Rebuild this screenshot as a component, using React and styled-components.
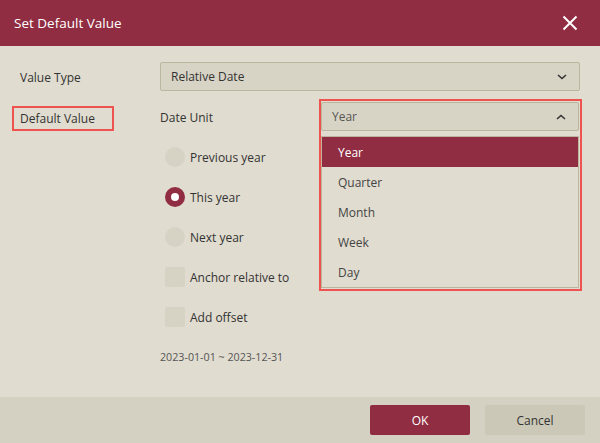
import styled, { createGlobalStyle } from "styled-components";
import { useState } from "react";

const GlobalStyle = createGlobalStyle`
  html, body { margin: 0; padding: 0; }
  body { font-family: "Open Sans", "Noto Sans", sans-serif; background: #e0dccf; }
`;

const MAROON = "#912d42";

const Dialog = styled.div`
  width: 600px;
  height: 443px;
  display: flex;
  flex-direction: column;
  background: #e0dccf;
  color: #333;
  font-size: 12px;
`;

const Header = styled.div`
  height: 46px;
  flex-shrink: 0;
  background: ${MAROON};
  display: flex;
  align-items: center;
  justify-content: space-between;
  padding: 0 22px 0 14px;
  color: #fff;
  font-size: 13.5px;
`;

const CloseBtn = styled.button`
  border: 0;
  background: transparent;
  padding: 0;
  width: 16px;
  height: 16px;
  display: flex;
  cursor: pointer;
`;

const Body = styled.div`
  flex: 1;
  display: grid;
  grid-template-columns: 140px 1fr;
  grid-auto-rows: min-content;
  row-gap: 11px;
  padding: 16px 20px 0 20px;
`;

const Label = styled.div`
  height: 29px;
  padding-top: 1px;
  box-sizing: border-box;
  display: flex;
  align-items: center;
`;

const MarkedLabel = styled.div`
  margin: 4px 0 0 -8px;
  width: 102px;
  height: 25px;
  box-sizing: border-box;
  border: 2px solid #ef5350;
  padding-left: 6px;
  display: flex;
  align-items: center;
`;

const Select = styled.div`
  height: 29px;
  box-sizing: border-box;
  border: 1px solid #bcb69f;
  border-radius: 2px;
  background: #d8d4c5;
  display: flex;
  align-items: center;
  justify-content: space-between;
  padding: 0 12px 0 10px;
  color: ${(p) => (p.$muted ? "#555" : "#333")};
`;

const Column = styled.div`
  display: flex;
  flex-direction: column;
`;

const UnitRow = styled.div`
  display: flex;
  height: 29px;
`;

const UnitLabel = styled.div`
  width: 159px;
  padding-top: 1px;
  display: flex;
  align-items: center;
`;

const UnitField = styled.div`
  position: relative;
  flex: 1;
`;

const Popover = styled.div`
  position: absolute;
  top: -3px;
  left: 0;
  width: 263px;
  box-sizing: border-box;
  border: 2px solid #ef5350;
  padding: 1px 1px 1px 0;
  display: flex;
  flex-direction: column;
  gap: 5px;
  z-index: 2;
`;

const Menu = styled.div`
  border: 1px solid #bcb69f;
  background: #e0dccf;
  display: flex;
  flex-direction: column;
`;

const MenuItem = styled.div`
  height: 30px;
  display: flex;
  align-items: center;
  padding-left: 16px;
  background: ${(p) => (p.$active ? MAROON : "transparent")};
  color: ${(p) => (p.$active ? "#fff" : "#444")};
`;

const Options = styled.div`
  display: flex;
  flex-direction: column;
  gap: 20px;
  margin-top: 16px;
  padding-left: 5px;
`;

const Option = styled.label`
  display: flex;
  align-items: center;
  gap: 5px;
  height: 20px;
`;

const Radio = styled.span`
  width: 20px;
  height: 20px;
  border-radius: 50%;
  background: ${(p) => (p.$checked ? MAROON : "#d6d2c4")};
  display: flex;
  align-items: center;
  justify-content: center;
  &::after {
    content: "";
    width: 8px;
    height: 8px;
    border-radius: 50%;
    background: #fff;
    display: ${(p) => (p.$checked ? "block" : "none")};
  }
`;

const Check = styled.span`
  width: 20px;
  height: 20px;
  border-radius: 2px;
  background: #d6d2c4;
`;

const RangeText = styled.div`
  margin-top: 23px;
  font-size: 10.7px;
  color: #555;
`;

const Footer = styled.div`
  height: 46px;
  flex-shrink: 0;
  background: #d5d1c2;
  display: flex;
  align-items: center;
  justify-content: flex-end;
  gap: 15px;
  padding-right: 15px;
`;

const Button = styled.button`
  width: 100px;
  height: 30px;
  border: 0;
  border-radius: 2px;
  font-family: inherit;
  font-size: 12px;
  background: ${(p) => (p.$primary ? MAROON : "#ccc8b8")};
  color: ${(p) => (p.$primary ? "#fff" : "#333")};
  cursor: pointer;
`;

const Chevron = ({ up }) => (
  <svg width="10" height="6" viewBox="0 0 10 6">
    <path
      d={up ? "M1 5 L5 1.5 L9 5" : "M1 1 L5 4.5 L9 1"}
      fill="none"
      stroke="#333"
      strokeWidth="1.6"
    />
  </svg>
);

const units = ["Year", "Quarter", "Month", "Week", "Day"];

export default function App() {
  const [unit, setUnit] = useState("Year");
  const [rel, setRel] = useState("this");
  return (
    <Dialog>
      <GlobalStyle />
      <Header>
        <span>Set Default Value</span>
        <CloseBtn aria-label="Close">
          <svg width="16" height="16" viewBox="0 0 16 16">
            <path d="M1.5 1.5 L14.5 14.5 M14.5 1.5 L1.5 14.5" stroke="#fff" strokeWidth="2" />
          </svg>
        </CloseBtn>
      </Header>
      <Body>
        <Label>Value Type</Label>
        <Select>
          <span>Relative Date</span>
          <Chevron />
        </Select>
        <div>
          <MarkedLabel>Default Value</MarkedLabel>
        </div>
        <Column>
          <UnitRow>
            <UnitLabel>Date Unit</UnitLabel>
            <UnitField>
              <Popover>
                <Select $muted>
                  <span>{unit}</span>
                  <Chevron up />
                </Select>
                <Menu>
                  {units.map((u) => (
                    <MenuItem key={u} $active={u === unit} onClick={() => setUnit(u)}>
                      {u}
                    </MenuItem>
                  ))}
                </Menu>
              </Popover>
            </UnitField>
          </UnitRow>
          <Options>
            <Option onClick={() => setRel("prev")}>
              <Radio $checked={rel === "prev"} />
              Previous year
            </Option>
            <Option onClick={() => setRel("this")}>
              <Radio $checked={rel === "this"} />
              This year
            </Option>
            <Option onClick={() => setRel("next")}>
              <Radio $checked={rel === "next"} />
              Next year
            </Option>
            <Option>
              <Check />
              Anchor relative to
            </Option>
            <Option>
              <Check />
              Add offset
            </Option>
          </Options>
          <RangeText>2023-01-01 ~ 2023-12-31</RangeText>
        </Column>
      </Body>
      <Footer>
        <Button $primary>OK</Button>
        <Button>Cancel</Button>
      </Footer>
    </Dialog>
  );
}
